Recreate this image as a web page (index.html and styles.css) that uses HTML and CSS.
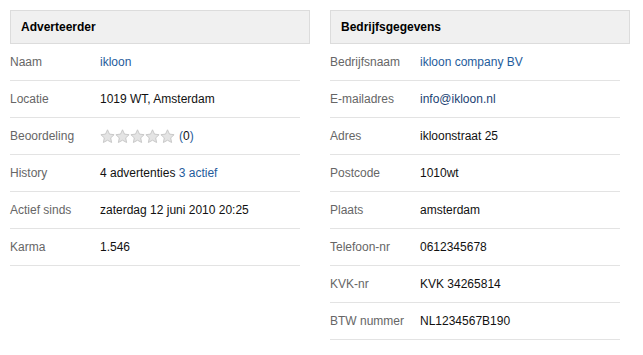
FILE: index.html
```html
<!DOCTYPE html>
<html lang="nl">
<head>
<meta charset="utf-8">
<title>Adverteerder</title>
<link rel="stylesheet" href="styles.css">
</head>
<body>
<div class="page">
  <section class="panel">
    <h2 class="panel-head">Adverteerder</h2>
    <div class="row"><span class="label">Naam</span><span class="value"><a class="link" href="#">ikloon</a></span></div>
    <div class="row"><span class="label">Locatie</span><span class="value">1019 WT, Amsterdam</span></div>
    <div class="row"><span class="label">Beoordeling</span><span class="value rating">
      <svg class="stars" width="75" height="15" viewBox="0 0 75 15">
        <defs>
          <path id="st" d="M7.5 0.8l2.0 4.3 4.6 0.6-3.4 3.2 0.9 4.6-4.1-2.3-4.1 2.3 0.9-4.6-3.4-3.2 4.6-0.6z"/>
        </defs>
        <use href="#st" x="0" class="star"/>
        <use href="#st" x="15" class="star"/>
        <use href="#st" x="30" class="star"/>
        <use href="#st" x="45" class="star"/>
        <use href="#st" x="60" class="star"/>
      </svg>
      <span class="count">(<span class="zero">0</span>)</span></span></div>
    <div class="row"><span class="label">History</span><span class="value">4 advertenties <a class="link" href="#">3 actief</a></span></div>
    <div class="row"><span class="label">Actief sinds</span><span class="value">zaterdag 12 juni 2010 20:25</span></div>
    <div class="row"><span class="label">Karma</span><span class="value">1.546</span></div>
  </section>
  <section class="panel">
    <h2 class="panel-head">Bedrijfsgegevens</h2>
    <div class="row"><span class="label">Bedrijfsnaam</span><span class="value"><a class="link" href="#">ikloon company BV</a></span></div>
    <div class="row"><span class="label">E-mailadres</span><span class="value"><a class="link dark" href="#">info@ikloon.nl</a></span></div>
    <div class="row"><span class="label">Adres</span><span class="value">ikloonstraat 25</span></div>
    <div class="row"><span class="label">Postcode</span><span class="value">1010wt</span></div>
    <div class="row"><span class="label">Plaats</span><span class="value">amsterdam</span></div>
    <div class="row"><span class="label">Telefoon-nr</span><span class="value">0612345678</span></div>
    <div class="row"><span class="label">KVK-nr</span><span class="value">KVK 34265814</span></div>
    <div class="row"><span class="label">BTW nummer</span><span class="value">NL1234567B190</span></div>
  </section>
</div>
</body>
</html>
```
FILE: styles.css
```css
html, body {
  margin: 0;
  padding: 0;
  background: #ffffff;
}
body {
  font-family: "Liberation Sans", Arial, sans-serif;
  font-size: 12px;
  color: #111;
}
.page {
  display: flex;
  gap: 20px;
  padding: 10px;
  align-items: flex-start;
}
.panel {
  width: 300px;
  display: flex;
  flex-direction: column;
}
.panel-head {
  margin: 0;
  box-sizing: border-box;
  height: 34px;
  display: flex;
  align-items: center;
  padding: 0 10px;
  background: #f0f0f0;
  border: 1px solid #dcdcdc;
  font-size: 12px;
  font-weight: bold;
  color: #000;
}
.row {
  width: 290px;
  height: 36px;
  border-bottom: 1px solid #e3e3e3;
  display: flex;
  align-items: center;
}
.label {
  width: 90px;
  flex: none;
  color: #666;
}
.value {
  color: #111;
}
.link {
  color: #1f5c9c;
  text-decoration: none;
}
.link.dark {
  color: #1b3f73;
}
.rating {
  display: flex;
  align-items: center;
  gap: 4px;
}
.stars {
  display: block;
}
.star {
  fill: #e4e4e4;
  stroke: #c4c4c4;
  stroke-width: 0.9;
  stroke-linejoin: round;
}
.count {
  color: #1f5c9c;
}
.zero {
  color: #111;
}
```
